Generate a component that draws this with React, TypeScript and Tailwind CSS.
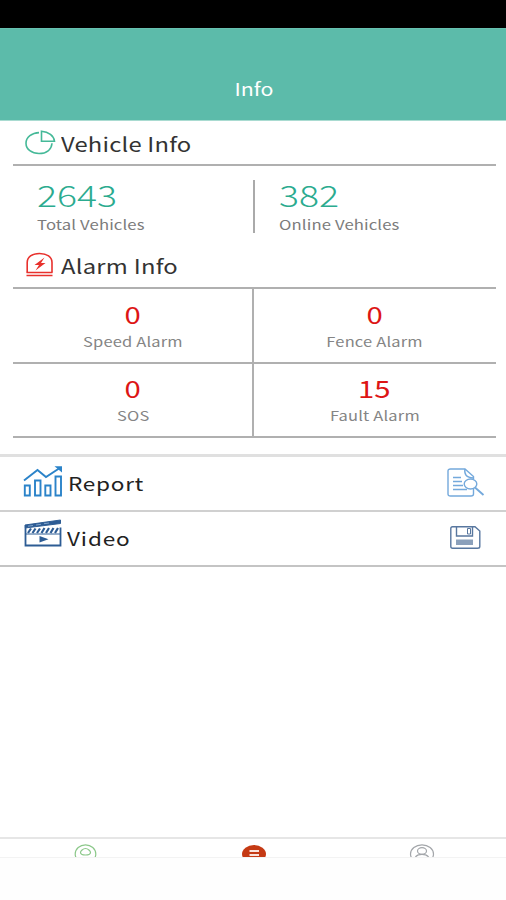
type CellProps = {
  value: string;
  label: string;
  className?: string;
}

const pageFont = 'font-["Noto_Sans_CJK_SC","Noto_Sans",sans-serif]'

function PieIcon() {
  return (
    <svg width="32" height="26" viewBox="0 0 32 26" fill="none" stroke="#45b998" strokeWidth="1.6">
      <path d="M14 2.6C7 2.8 1 7.2 1 13.2C1 19.3 6.8 23.5 14 23.5C21.5 23.5 26.5 19.6 27 13.2" />
      <path d="M16.5 1.2V11.3H29.5C29 5.8 23.5 1.7 16.5 1.2Z" />
    </svg>
  )
}

function AlarmIcon() {
  return (
    <svg width="28" height="26" viewBox="0 0 28 26" fill="none" stroke="#e8312d" strokeWidth="1.6">
      <path d="M1.2 20.5V10.5C1.2 5 6 1.5 13.5 1.5S26 5 26 10.5V20.5" />
      <path d="M0.5 20.5H26.5M0.5 23.5H26.5" strokeWidth="1.3" />
      <path d="M18.5 5.5L8.5 13H13L9.5 18.5L19.5 11H15L18.5 5.5Z" fill="#e8312d" stroke="none" />
    </svg>
  )
}

function ChartIcon() {
  return (
    <svg width="40" height="32" viewBox="0 0 40 32" fill="none" stroke="#2b83c9" strokeWidth="1.9">
      <path d="M1 14.5L14.5 4L23 11L36 2.5" />
      <path d="M31.5 0.3H39V6.5Z" fill="#2b83c9" stroke="none" />
      <path d="M1.8 19.5H6.8V29.5H1.8ZM12 14.5H17.5V29.5H12ZM22.3 19.5H27.5V29.5H22.3ZM32.5 10.5H38V29.5H32.5Z" />
    </svg>
  )
}

function ClapperIcon() {
  return (
    <svg width="38" height="30" viewBox="0 0 38 30" fill="none" stroke="#2d5c94">
      <path d="M1 6L36.5 1V4.5L1 9Z" fill="#2d5c94" strokeWidth="1" />
      <path d="M4 7.2L9 6.5M12 6L17 5.3M20 4.7L25 4" stroke="#7fa3cb" strokeWidth="1" />
      <path d="M1.5 9V26.5H36.5V8.5" strokeWidth="1.8" />
      <path d="M2 15H36" strokeWidth="1" />
      <path d="M4 14L7 9.5M8.5 14L11.5 9.5M13 14L16 9.5M17.5 14L20.5 9M22 14L25 9M26.5 14L29.5 9M31 14L34 9" strokeWidth="2.2" />
      <path d="M15.5 17L24.5 20.2L15.5 23.5Z" fill="#2d5c94" stroke="none" />
    </svg>
  )
}

function SearchDocIcon() {
  return (
    <svg width="38" height="30" viewBox="0 0 38 30" fill="none" stroke="#74a9dc" strokeWidth="1.4">
      <path d="M26.5 20V26Q26.5 28 24 28H3.5Q1 28 1 26V3Q1 1 3.5 1H18L26.5 8.5V11" />
      <path d="M18 1C17 6 19 9.5 26.5 10" />
      <path d="M6 9.5H14M6 13.5H15M6 17.5H16M6 21.5H20" />
      <ellipse cx="23.5" cy="16" rx="6.3" ry="5" fill="#fff" />
      <path d="M28 19.5L36.5 27" strokeWidth="1.9" />
    </svg>
  )
}

function DiskIcon() {
  return (
    <svg width="32" height="24" viewBox="0 0 32 24" fill="none" stroke="#58779f" strokeWidth="1.4">
      <path d="M2.5 0.7H25L29.8 5V20.5Q29.8 22.3 27.5 22.3H2.5Q0.8 22.3 0.8 20.5V2.5Q0.8 0.7 2.5 0.7Z" />
      <path d="M6.5 1V10H22.5V1" />
      <path d="M17.5 2.5H20.5V8H17.5Z" strokeWidth="1" />
      <path d="M6 13.5H23V19H6Z" fill="#8ba0bb" stroke="none" />
    </svg>
  )
}

function AlarmCell({ value, label, className = "pt-[9px]" }: CellProps) {
  return (
    <div className={`flex flex-col items-center border-b-2 border-[#b0b0b0] ${className}`}>
      <span className="h-8 scale-x-[1.22] text-[24px] leading-8 text-[#dd1515]">{value}</span>
      <span className="mt-px h-5 scale-x-[1.22] text-[13.5px] leading-5 tracking-[0.15px] text-[#858585]">{label}</span>
    </div>
  )
}

export default function App() {
  return (
    <div className={`flex h-[900px] w-[506px] flex-col overflow-hidden bg-white ${pageFont}`}>
      <div className="h-7 shrink-0 bg-black" />
      <header className="flex h-[93px] shrink-0 justify-center border-t border-b border-t-[#67c1b0] border-b-[#a9dbd1] bg-[#5cbbaa] pt-[46px] pl-0.5">
        <span className="h-7 scale-x-[1.22] text-[17.5px] leading-7 text-white">Info</span>
      </header>

      <section className="mr-[10.5px] ml-[12.5px] h-[168px] shrink-0">
        <div className="flex h-[45px] border-b-2 border-[#b0b0b0] pl-3">
          <div className="w-[36.5px] pt-[9px]"><PieIcon /></div>
          <span className="mt-[7px] h-8 origin-left scale-x-[1.22] text-[19.5px] leading-8 tracking-[0.15px] text-[#333]">Vehicle Info</span>
        </div>
        <div className="flex h-[82px] pt-[14px]">
          <div className="h-[53px] w-[242px] border-r-2 border-[#aaa] pl-[24px]">
            <div className="h-7 origin-left scale-x-[1.29] text-[29px] leading-7 font-light text-[#2bab8f]">2643</div>
            <div className="mt-1.5 h-5 origin-left scale-x-[1.22] text-[13.7px] leading-5 tracking-[0.1px] whitespace-nowrap text-[#7c7c7c]">Total Vehicles</div>
          </div>
          <div className="pl-6">
            <div className="h-7 origin-left scale-x-[1.29] text-[29px] leading-7 font-light text-[#2bab8f]">382</div>
            <div className="mt-1.5 h-5 origin-left scale-x-[1.22] text-[13.7px] leading-5 tracking-[0.1px] whitespace-nowrap text-[#7c7c7c]">Online Vehicles</div>
          </div>
        </div>
        <div className="flex h-[41px] border-b-2 border-[#b0b0b0] pl-3">
          <div className="w-[36.5px] pt-[4px] pl-[1px]"><AlarmIcon /></div>
          <span className="mt-[2px] h-8 origin-left scale-x-[1.22] text-[19.5px] leading-8 tracking-[0.2px] text-[#333]">Alarm Info</span>
        </div>
      </section>

      <section className="mr-[10.5px] ml-[12.5px] grid h-[149px] shrink-0 grid-cols-[241px_1fr] grid-rows-[75px_74px]">
        <AlarmCell value="0" label="Speed Alarm" className="border-r-2 pt-[9px] pl-0.5" />
        <AlarmCell value="0" label="Fence Alarm" />
        <AlarmCell value="0" label="SOS" className="border-r-2 pt-[8px] pl-0.5" />
        <AlarmCell value="15" label="Fault Alarm" className="pt-[8px]" />
      </section>

      <section className="mt-[16px] shrink-0 border-t-[3px] border-[#e0e0e0]">
        <div className="flex h-[55px] border-b-2 border-[#d0d0d0] pr-[21px] pl-[23px]">
          <div className="w-[44.5px] pt-[9px]"><ChartIcon /></div>
          <span className="mt-[10px] h-8 origin-left scale-x-[1.22] text-[18.5px] leading-8 tracking-[0.6px] text-[#222]">Report</span>
          <div className="ml-auto pt-[11px]"><SearchDocIcon /></div>
        </div>
        <div className="flex h-[55px] border-b-2 border-[#c4c4c4] pr-[24px] pl-[24px]">
          <div className="w-[43px] pt-[7px]"><ClapperIcon /></div>
          <span className="mt-[10px] h-8 origin-left scale-x-[1.22] text-[18.5px] leading-8 tracking-[0.7px] text-[#222]">Video</span>
          <div className="ml-auto pt-[14px]"><DiskIcon /></div>
        </div>
      </section>

      <nav className="mt-[270px] grid h-5 shrink-0 grid-cols-3 justify-items-center overflow-hidden border-t-2 border-[#e6e6e6] pt-[5px] pl-0.5">
        <svg width="24" height="22" viewBox="0 0 24 22" fill="none" stroke="#8cc88a" strokeWidth="1.2">
          <ellipse cx="11.5" cy="10" rx="10.3" ry="9.2" />
          <path d="M11.5 4.5C14 4.500 16.500 7 16.500 8.500S14.500 11 11.500 11S6.500 10 6.500 8.500S9 4.500 11.500 4.500Z" />
        </svg>
        <svg width="26" height="22" viewBox="0 0 26 22" fill="none">
          <ellipse cx="13" cy="10" rx="12" ry="9" fill="#c53a14" />
          <path d="M8.5 7H18M8.5 11H18" stroke="#fbe3dc" strokeWidth="2" />
        </svg>
        <svg width="26" height="22" viewBox="0 0 26 22" fill="none" stroke="#a3a6aa" strokeWidth="1.2">
          <ellipse cx="13" cy="10" rx="11.5" ry="9.2" />
          <ellipse cx="13" cy="7" rx="4.5" ry="3.3" />
          <path d="M6 14C7 11.5 10 10.3 13 10.3S19 11.5 20 14" />
        </svg>
      </nav>
      <div className="flex-1 border-t border-[#f3f3f3] bg-[#fefefe]" />
    </div>
  )
}
